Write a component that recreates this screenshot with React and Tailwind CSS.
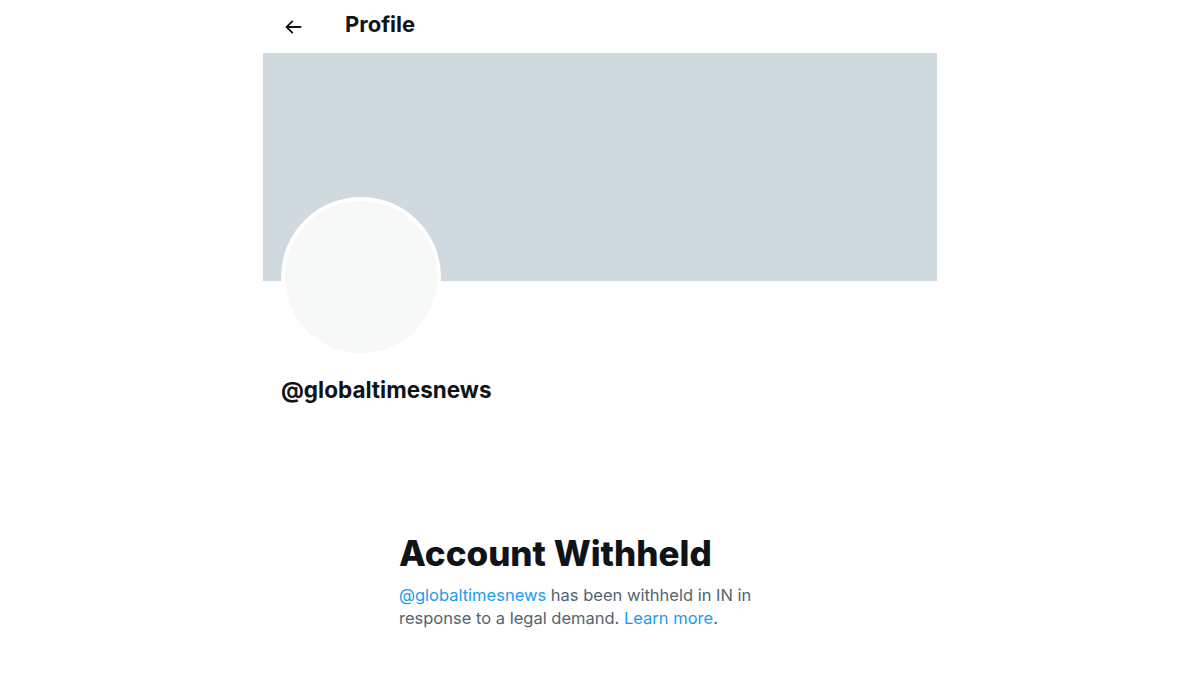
export default function App() {
  return (
    <div className="min-h-[675px] w-full bg-white" style={{ fontFamily: 'Inter, "Liberation Sans", sans-serif' }}>
      <div className="mx-auto w-[674px]">
        <div className="flex h-[53px] items-center pl-[19px]">
          <svg viewBox="0 0 24 24" className="h-[22px] w-[22px] fill-[#0f1419]">
            <path d="M7.414 13l5.043 5.04-1.414 1.42L3.586 12l7.457-7.46 1.414 1.42L7.414 11H21v2H7.414z" />
          </svg>
          <h1 className="-mt-[4px] ml-[41px] text-[22px] font-bold text-[#0f1419]">Profile</h1>
        </div>
        <div className="h-[228px] bg-[#cfd9de]" />
        <div className="px-[18px]">
          <div className="-mt-[84px] h-[160px] w-[160px] rounded-full border-4 border-white bg-[#f7f9f9]" />
          <div className="mt-[21px] text-[22.5px] font-bold leading-[24px] text-[#0f1419]">@globaltimesnews</div>
        </div>
        <div className="mx-auto mt-[131px] w-[402px]">
          <h2 className="text-[35px] font-extrabold leading-[40px] text-[#0f1419]">Account Withheld</h2>
          <p className="mt-[11px] text-[16.5px] leading-[23px] text-[#536471]">
            <span className="text-[#1d9bf0]">@globaltimesnews</span> has been withheld in IN in response to a legal demand.{' '}
            <span className="text-[#1d9bf0]">Learn more</span>.
          </p>
        </div>
      </div>
    </div>
  )
}
